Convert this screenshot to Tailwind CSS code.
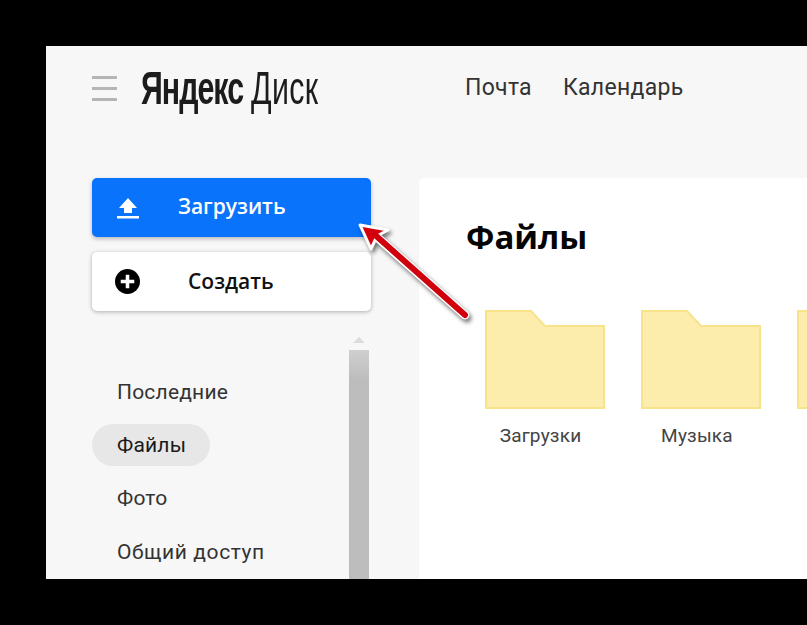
<!DOCTYPE html>
<html><head><meta charset="utf-8"><script src="https://cdn.jsdelivr.net/npm/@tailwindcss/browser@4"></script></head>
<body class="bg-black w-[807px] h-[625px] overflow-hidden relative font-['Open_Sans','Noto_Sans',sans-serif]">
<div class="ml-[46px] mt-[46px] w-[761px] h-[533px] bg-[#f7f7f7] overflow-hidden absolute top-0 left-0 flex flex-col">
  <header class="h-[132px] shrink-0 flex items-start pl-[46px] pt-[20px]">
    <div class="w-[25px] mt-[10px] flex flex-col gap-[8px]">
      <div class="h-[3px] bg-[#b5b5b5]"></div><div class="h-[3px] bg-[#b5b5b5]"></div><div class="h-[3px] bg-[#b5b5b5]"></div>
    </div>
    <div class="ml-[24px] w-[180px] h-[44px] flex items-center font-['Liberation_Sans',sans-serif] text-[46px] leading-[44px] text-[#1c1c1c] whitespace-nowrap origin-left scale-x-[0.66]"><span class="font-bold tracking-[-1.5px]">Яндекс</span><span class="ml-[12px] tracking-[0.6px]">Диск</span></div>
    <nav class="ml-[144px] mt-[8px] flex gap-[31px] text-[23px] leading-[28px] tracking-[0.3px] text-[#333] font-['Roboto',sans-serif]"><span>Почта</span><span>Календарь</span></nav>
  </header>
  <div class="flex flex-1 min-h-0">
    <aside class="w-[373px] shrink-0 pl-[46px] relative">
      <div class="w-[279px] h-[59px] rounded-[5px] bg-[#0a73fb] shadow-[0_2px_4px_rgba(0,0,0,0.25)] flex items-center text-white font-semibold text-[21px] pl-[24px]">
        <svg width="24" height="24" viewBox="0 0 24 24" fill="#fff"><path d="M12 2 L21 12 H16 V17 H8 V12 H3 Z"/><rect x="1" y="20" width="22" height="2.5"/></svg>
        <span class="ml-[38px] -mt-[1px]">Загрузить</span>
      </div>
      <div class="mt-[15px] w-[279px] h-[59px] rounded-[5px] bg-white shadow-[0_1px_4px_rgba(0,0,0,0.3)] flex items-center text-[#111] font-semibold text-[21px] pl-[23px]">
        <svg width="25" height="25" viewBox="0 0 24 24"><circle cx="12" cy="12" r="12" fill="#000"/><path d="M12 5.5V18.5M5.5 12H18.5" stroke="#fff" stroke-width="3.4"/></svg>
        <span class="ml-[48px]">Создать</span>
      </div>
      <div class="mt-[24px] pr-[20px] text-[21px] tracking-[0.2px] text-[#333] font-['Roboto',sans-serif] flex flex-col items-start">
        <div class="mt-[35px] h-[45px] leading-[45px] pl-[25px]">Последние</div>
        <div class="mt-[9px] h-[42px] leading-[42px] pl-[25px] pr-[24px] rounded-full bg-[#e7e7e7] text-[#1a1a1a]">Файлы</div>
        <div class="mt-[11px] h-[42px] leading-[42px] pl-[25px]">Фото</div>
        <div class="mt-[12px] h-[42px] leading-[42px] pl-[25px] tracking-[0.6px]">Общий доступ</div>
      </div>
      <div class="absolute left-[303px] top-[159px] w-[20px] h-[260px] flex flex-col items-center">
        <div class="w-0 h-0 border-x-[6px] border-x-transparent border-b-[6px] border-b-[#dcdcdc]"></div>
        <div class="mt-[7px] w-[20px] flex-1 bg-gradient-to-b from-[#cfcfcf] to-[#bdbdbd] to-[12%]"></div>
      </div>
    </aside>
    <main class="flex-1 bg-white rounded-tl-[5px] pl-[66px] pt-[36px] overflow-hidden">
      <h1 class="-ml-[19px] text-[33px] leading-[46px] font-bold text-[#050505]">Файлы</h1>
      <div class="mt-[50px] flex gap-[36px] w-[500px]">
        <div class="w-[120px] shrink-0 flex flex-col items-center">
          <svg width="120" height="99" viewBox="0 0 120 99"><path d="M1 1H46L60 16H119V98H1Z" fill="#fcedad" stroke="#f9e38a" stroke-width="2"/></svg>
          <span class="mt-[13px] text-[19px] leading-[28px] text-[#444] font-['Roboto',sans-serif] tracking-[0.2px] -ml-[9px]">Загрузки</span>
        </div>
        <div class="w-[120px] shrink-0 flex flex-col items-center">
          <svg width="120" height="99" viewBox="0 0 120 99"><path d="M1 1H46L60 16H119V98H1Z" fill="#fcedad" stroke="#f9e38a" stroke-width="2"/></svg>
          <span class="mt-[13px] text-[19px] leading-[28px] text-[#444] font-['Roboto',sans-serif] tracking-[0.2px] -ml-[8px]">Музыка</span>
        </div>
        <div class="w-[120px] shrink-0 flex flex-col items-center">
          <svg width="120" height="99" viewBox="0 0 120 99"><path d="M1 1H46L60 16H119V98H1Z" fill="#fcedad" stroke="#f9e38a" stroke-width="2"/></svg>
          <span class="mt-[13px] text-[19px] leading-[28px] text-[#444] font-['Roboto',sans-serif] tracking-[0.2px]">Соцсети</span>
        </div>
      </div>
    </main>
  </div>
</div>
<svg class="absolute left-[350px] top-[215px] drop-shadow-[2px_3px_2px_rgba(0,0,0,0.55)]" width="130" height="115" viewBox="350 215 130 115">
  <path d="M465 315 L378 238" stroke="#fff" stroke-width="9" stroke-linecap="round"/>
  <path d="M360 225 L388 230 L377 236 L371 249 Z" fill="#d4000c" stroke="#fff" stroke-width="3" stroke-linejoin="round"/>
  <path d="M465 315 L374 234" stroke="#d0000c" stroke-width="6" stroke-linecap="round"/>
</svg>
</body></html>
